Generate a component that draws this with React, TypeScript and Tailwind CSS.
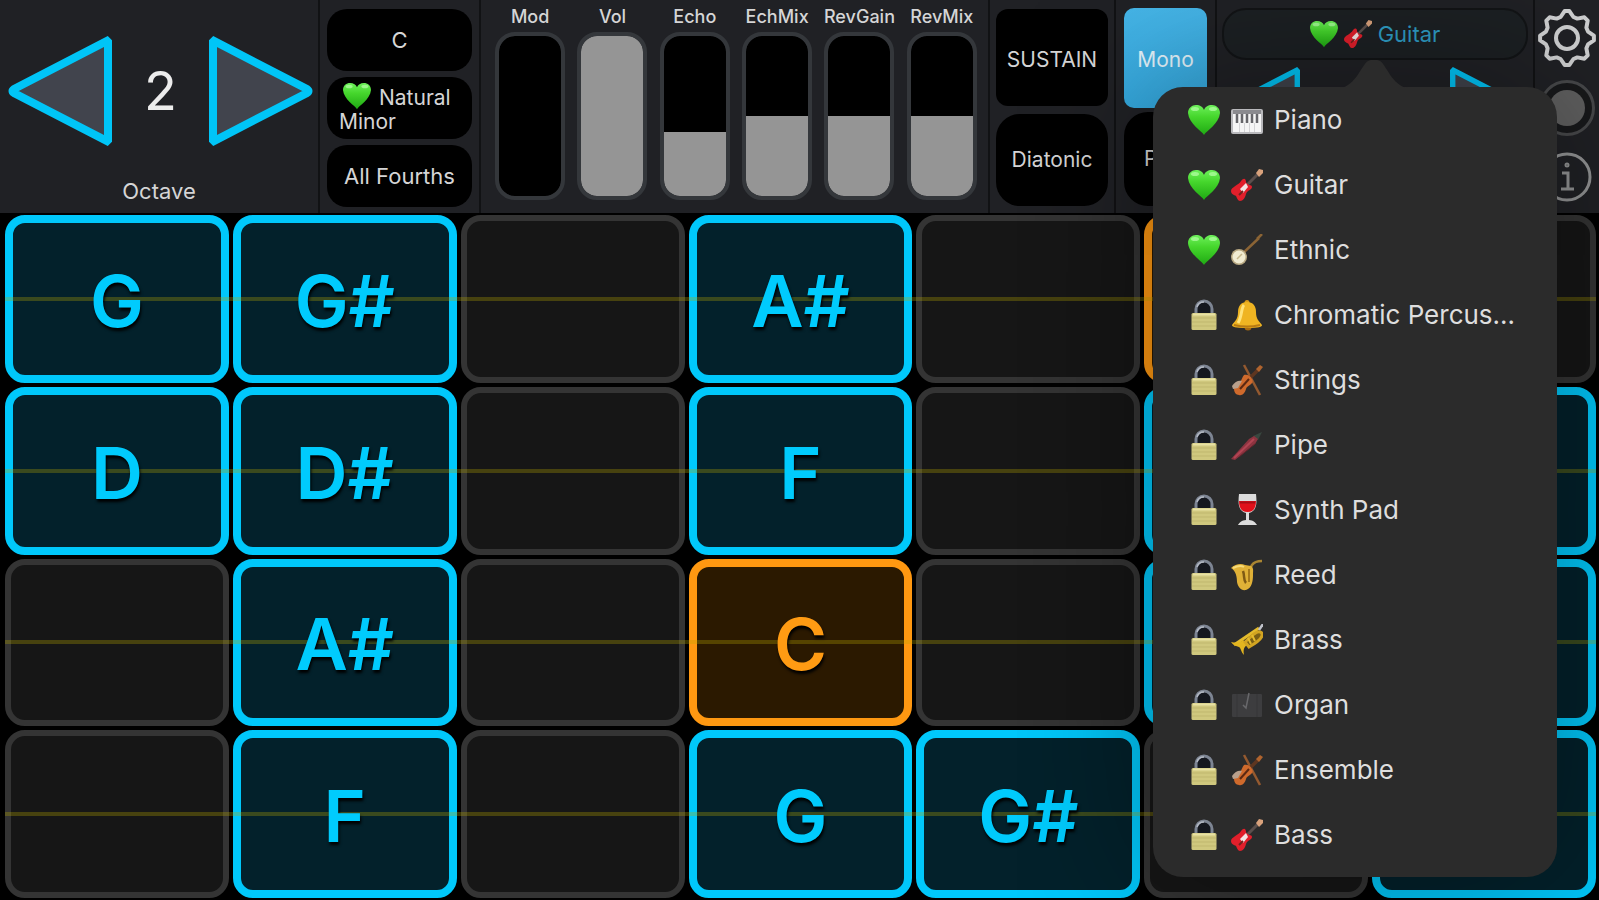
import { useState } from "react";
import type { ReactNode } from "react";
import clsx from "clsx";

type Tone = "off" | "on" | "root";
type Pad = { note: string; tone: Tone };

const NOTES = ["C", "C#", "D", "D#", "E", "F", "F#", "G", "G#", "A", "A#", "B"];
const C_MINOR = [0, 2, 3, 5, 7, 8, 10];
const ROW_STARTS = [7, 2, 9, 4];
const COLUMNS = 7;
// the instrument menu lies over the pads after this one
const LABELLED_COLUMNS = 5;

function buildRow(start: number): Pad[] {
  return Array.from({ length: COLUMNS }, (_, i) => {
    const n = (start + i) % 12;
    if (n === 0) return { note: NOTES[n], tone: "root" };
    return { note: NOTES[n], tone: C_MINOR.includes(n) ? "on" : "off" };
  });
}

const SLIDERS = [
  { name: "Mod", value: 0 },
  { name: "Vol", value: 100 },
  { name: "Echo", value: 40 },
  { name: "EchMix", value: 50 },
  { name: "RevGain", value: 50 },
  { name: "RevMix", value: 50 },
];

function Icon({ className, children }: { className?: string; children: ReactNode }) {
  return (
    <svg viewBox="0 0 32 32" className={clsx("shrink-0", className)} aria-hidden="true">
      {children}
    </svg>
  );
}

function Heart({ className }: { className?: string }) {
  return (
    <Icon className={className}>
      <defs>
        <linearGradient id="heart" x1="0" y1="0" x2="0" y2="1">
          <stop offset="0" stopColor="#6df05a" />
          <stop offset="0.4" stopColor="#45d62c" />
          <stop offset="1" stopColor="#1fa913" />
        </linearGradient>
      </defs>
      <path d="M16 31C14 27 1 20 0 9 0 4 4 1 8 1c4 0 7 2 8 5 1-3 4-5 8-5 4 0 8 3 8 8-1 11-14 18-16 22z" fill="url(#heart)" />
      <ellipse cx="7" cy="5" rx="4" ry="2" fill="#b6ffa8" opacity="0.7" />
      <ellipse cx="25" cy="5" rx="4" ry="2" fill="#b6ffa8" opacity="0.7" />
    </Icon>
  );
}

function Lock({ className }: { className?: string }) {
  return (
    <Icon className={className}>
      <path d="M8 16V10a8 8 0 0 1 16 0v6" fill="#15181f" stroke="#7d8593" strokeWidth="3" />
      <path d="M9 8a7 7 0 0 1 7-5" fill="none" stroke="#b4bac4" strokeWidth="1.500" />
      <rect x="3.500" y="14" width="25" height="17" rx="1.500" fill="#d0c87e" />
      <path d="M4 19h24M4 23h24M4 27h24" stroke="#c0b76e" strokeWidth="1" />
      <path d="M5 15.500h22" stroke="#e9e2a4" strokeWidth="2" />
    </Icon>
  );
}

function Piano({ className }: { className?: string }) {
  return (
    <Icon className={className}>
      <rect x="0" y="5" width="32" height="25" rx="2" fill="#b9b9bc" />
      <rect x="2" y="6" width="28" height="5" fill="#8b8b8f" />
      <rect x="2" y="10" width="28" height="18" fill="#f5f5f5" />
      <path d="M6 10v9M11 10v9M16 10v9M21 10v9M26 10v9" stroke="#66666a" strokeWidth="2.500" />
      <path d="M8.500 19v9M13.500 19v9M18.500 19v9M23.500 19v9" stroke="#d4d4d6" strokeWidth="1" />
    </Icon>
  );
}

function Guitar({ className }: { className?: string }) {
  return (
    <Icon className={className}>
      <path d="M15 17 27 5" stroke="#5b4f4c" strokeWidth="3" />
      <path d="M25 4 28 0l4 1v3l-4 4z" fill="#d9a27c" />
      <path d="M10 12c3-4 5-2 5 1 1 4 6 2 6 5 0 3-5 3-6 7s-3 7-6 7c-2 0-3-3-4-5-2-1-5-2-5-5 0-4 8-6 10-10z" fill="#e11f2b" />
      <path d="m9 20 6-6 2 4-5 6z" fill="#f3e6e4" />
      <path d="M8 26l4-4" stroke="#77211f" strokeWidth="2" />
    </Icon>
  );
}

function Banjo({ className }: { className?: string }) {
  return (
    <Icon className={className}>
      <path d="M10 21 28 4" stroke="#8b6435" strokeWidth="2.500" />
      <path d="M26 5l5-5" stroke="#8b6435" strokeWidth="2.500" />
      <circle cx="8" cy="23" r="8" fill="#b9a983" />
      <circle cx="8" cy="23" r="6.500" fill="#f1ecd2" />
      <path d="M6 25l5-5" stroke="#c6b88d" strokeWidth="1.500" />
    </Icon>
  );
}

function Bell({ className }: { className?: string }) {
  return (
    <Icon className={className}>
      <circle cx="16" cy="3.500" r="2.500" fill="#d79a1b" />
      <circle cx="17" cy="28" r="3.500" fill="#a86a10" />
      <path d="M16 3c6 0 9 4 9 10 0 7 3 9 6 13 0 2-3 3-15 3S1 28 1 26c3-4 6-6 6-13C7 7 10 3 16 3z" fill="#efb422" />
      <path d="M13 6c-3 3-2 12-6 18" stroke="#ffe27a" strokeWidth="3" fill="none" />
      <path d="M3 26c8 2 18 2 26 0" stroke="#b77a12" strokeWidth="2" fill="none" />
    </Icon>
  );
}

function Violin({ className }: { className?: string }) {
  return (
    <Icon className={className}>
      <path d="M13 1 29 31" stroke="#94592f" strokeWidth="2.500" />
      <path d="M15 18 27 6" stroke="#5e3620" strokeWidth="3.500" />
      <path d="m25 5 4-4 3 2-4 5z" fill="#b0642e" />
      <path d="M13 11c3-1 7 1 8 4 1 2 1 4-1 5-2 2-4 2-5 5-1 4-4 7-7 6-3 0-5-3-5-6 0-4 4-5 6-7s2-5 4-7z" fill="#cf6a2c" />
      <path d="M1 22c3-5 7-6 10-5l-4 7-5 1z" fill="#b9a08c" />
      <path d="m9 25 9-10" stroke="#5a2812" strokeWidth="2" />
    </Icon>
  );
}

function Pipe({ className }: { className?: string }) {
  return (
    <Icon className={className}>
      <path d="M22 7 31 3 27 11z" fill="#39473f" />
      <path d="M0 30 18 10l5-3 4 3-3 5L4 31z" fill="#8d3440" />
      <path d="M3 29 23 10" stroke="#b14453" strokeWidth="2" />
      <path d="M8 28 25 14" stroke="#64252d" strokeWidth="1" />
    </Icon>
  );
}

function Wine({ className }: { className?: string }) {
  return (
    <Icon className={className}>
      <path d="M8 0h17c1 9 1 17-7 19v7c4 0 7 3 8 5H7c1-2 4-5 8-5v-7C7 17 7 9 8 0z" fill="#dcdcdc" />
      <path d="M8 7h17c0 6-2 11-8.500 11S8 13 8 7z" fill="#e0101a" />
      <path d="M9 8.500h15" stroke="#a80c15" strokeWidth="2" />
    </Icon>
  );
}

function Sax({ className }: { className?: string }) {
  return (
    <Icon className={className}>
      <path d="M31 2c-5 0-8 1-10 4l-3 6" fill="none" stroke="#a98532" strokeWidth="2.500" />
      <path d="M0 9c4-4 10-5 14-3l6 1c3 2 2 5 2 9 0 6-1 13-7 15-5 1-8-3-9-8C6 18 5 12 0 9z" fill="#e0b137" />
      <path d="M12 12c2 5 0 9 3 12" fill="none" stroke="#7f5a14" strokeWidth="2.500" />
      <path d="M18 10v13" stroke="#a77a1b" strokeWidth="2" />
      <path d="M2 9c4-2 8-3 11-1" fill="none" stroke="#f6da78" strokeWidth="2" />
    </Icon>
  );
}

function Trumpet({ className }: { className?: string }) {
  return (
    <Icon className={className}>
      <path d="M3 21 28 4" stroke="#e4bb2c" strokeWidth="3" />
      <path d="M28 6l4-6" stroke="#bfc1c9" strokeWidth="2.500" />
      <path d="M0 18c5 1 9 1 12-2l5 4c-4 3-5 5-4 11-3-3-3-7-5-8-3-1-6-2-8-5z" fill="#e3b51f" />
      <path d="M14 18l9-8c5-4 9-2 8 2-1 3-6 7-13 11z" fill="#7b5f14" stroke="#d2a421" strokeWidth="3" />
      <path d="m17 14 3 6M21 11l3 6" stroke="#e4bb2c" strokeWidth="2" />
    </Icon>
  );
}

function Organ({ className }: { className?: string }) {
  return (
    <Icon className={className}>
      <rect x="1" y="5" width="30" height="23" rx="1" fill="#3d3d3f" />
      <path d="M6 5v23M26 5v23" stroke="#363638" strokeWidth="1" />
      <path d="M12 16l3 3 3-15" fill="none" stroke="#68686b" strokeWidth="1.500" />
    </Icon>
  );
}

const INSTRUMENTS = [
  { name: "Piano", icon: Piano, free: true },
  { name: "Guitar", icon: Guitar, free: true },
  { name: "Ethnic", icon: Banjo, free: true },
  { name: "Chromatic Percus…", icon: Bell, free: false },
  { name: "Strings", icon: Violin, free: false },
  { name: "Pipe", icon: Pipe, free: false },
  { name: "Synth Pad", icon: Wine, free: false },
  { name: "Reed", icon: Sax, free: false },
  { name: "Brass", icon: Trumpet, free: false },
  { name: "Organ", icon: Organ, free: false },
  { name: "Ensemble", icon: Violin, free: false },
  { name: "Bass", icon: Guitar, free: false },
];

function Arrow({ dir, label, small, onClick }: { dir: "left" | "right"; label: string; small?: boolean; onClick?: () => void }) {
  return (
    <button type="button" aria-label={label} onClick={onClick} className="shrink-0">
      <svg
        viewBox="0 0 104 110"
        className={clsx(small ? "h-[74px] w-[70px]" : "h-[110px] w-[104px]", dir === "right" && "-scale-x-100")}
      >
        <path
          d="M6 53 99 5 100 6V104L99 105 6 57Q3 55 6 53z"
          fill="#41444d"
          stroke="#00c5f7"
          strokeWidth="8"
          strokeLinejoin="miter"
        />
      </svg>
    </button>
  );
}

// eight blunt teeth, the first one pointing straight up
const gearPoints = Array.from({ length: 8 }, (_, k) =>
  [
    [-5, 27],
    [5, 27],
    [17, 22],
    [28, 22],
  ].map(([deg, r]) => {
    const a = ((k * 45 + deg) * Math.PI) / 180;
    return `${(r * Math.sin(a)).toFixed(1)},${(-r * Math.cos(a)).toFixed(1)}`;
  }),
)
  .flat()
  .join(" ");

function Gear() {
  return (
    <svg viewBox="-30 -30 60 60" className="size-[60px]" fill="none" stroke="#cfd0d1" strokeWidth="4" strokeLinejoin="round">
      <polygon points={gearPoints} />
      <circle r="11" />
    </svg>
  );
}

function Slider({ name, value, onChange }: { name: string; value: number; onChange: (v: number) => void }) {
  return (
    <label className="flex w-0 flex-1 flex-col items-center">
      <span className="h-6 text-[18px] leading-6 font-medium">{name}</span>
      <input
        type="range"
        min={0}
        max={100}
        value={value}
        onChange={(e) => onChange(Number(e.target.value))}
        className="mt-[3px] h-[168px] w-[70px] appearance-none rounded-[20px] border-4 border-[#34373b] bg-clip-padding [direction:rtl] [writing-mode:vertical-lr] [&::-webkit-slider-thumb]:size-1 [&::-webkit-slider-thumb]:appearance-none [&::-webkit-slider-thumb]:opacity-0"
        style={{ backgroundImage: `linear-gradient(to top, #959595 ${value}%, #000 ${value}%)` }}
      />
    </label>
  );
}

function PadButton({ note, tone, labelled }: Pad & { labelled: boolean }) {
  return (
    <button
      type="button"
      aria-label={note}
      className={clsx(
        "flex items-center justify-center rounded-[20px] pt-1 text-7xl font-semibold",
        tone === "on" && "border-8 border-[#00c8fb] bg-[#03212b] text-[#00cbfd]",
        tone === "root" && "border-8 border-[#ff9811] bg-[#2b1900] text-[#ff9b13]",
        tone === "off" && "border-[6px] border-[#343434] bg-[#161616]",
      )}
    >
      {labelled && tone !== "off" && <span className="relative z-10 [text-shadow:1px_3px_3px_#000]">{note}</span>}
    </button>
  );
}

function InstrumentMenu({ onPick }: { onPick: (i: number) => void }) {
  return (
    <div className="absolute top-[87px] -right-6 z-20 w-[404px] rounded-[30px] bg-[#2b2b2b] pb-[10px] shadow-[0_0_150px_rgba(0,0,0,0.4)]">
      <svg viewBox="0 0 68 28" className="absolute -top-[27px] right-[149px] h-7 w-[68px]">
        <path d="M0 28C16 26 22 4 28 1Q34 -2 40 1C46 4 52 26 68 28z" fill="#2b2b2b" />
      </svg>
      <ul>
        {INSTRUMENTS.map(({ name, icon: Glyph, free }, i) => (
          <li key={name}>
            <button
              type="button"
              onClick={() => onPick(i)}
              className="flex h-[65px] w-full items-center gap-[11px] pr-4 pl-[35px] text-left text-[26px] whitespace-nowrap text-[#dedede]"
            >
              {free ? <Heart className="size-8" /> : <Lock className="size-8" />}
              <Glyph className="size-8" />
              {name}
            </button>
          </li>
        ))}
      </ul>
    </div>
  );
}

export default function App() {
  const [octave, setOctave] = useState(2);
  const [levels, setLevels] = useState(SLIDERS.map((s) => s.value));
  const [picked, setPicked] = useState(1);
  const current = INSTRUMENTS[picked];
  const CurrentIcon = current.icon;

  return (
    <div className="flex min-h-screen flex-col overflow-hidden bg-black font-['Inter','Liberation_Sans',sans-serif] text-[#d5d5d6]">
      <header className="grid h-[213px] grid-cols-[318fr_159fr_507fr_124fr_99fr_316fr_64fr] gap-0.5 bg-[#111214] *:min-w-0 *:bg-[#202125]">
        <section className="flex flex-col items-center pt-9">
          <div className="flex w-full items-center justify-between pr-[5px] pl-2">
            <Arrow dir="left" label="Octave down" onClick={() => setOctave(octave - 1)} />
            <output className="text-[54px] leading-none text-[#ececec]">{octave}</output>
            <Arrow dir="right" label="Octave up" onClick={() => setOctave(octave + 1)} />
          </div>
          <span className="mt-[33px] text-[22px] leading-6">Octave</span>
        </section>

        <section className="flex flex-col gap-[6px] px-[7px] pt-[9px] pb-[6px] text-[22px] leading-6">
          <button type="button" className="flex-1 rounded-[20px] bg-black">C</button>
          <button type="button" className="flex-1 rounded-[20px] bg-black pl-3 text-left text-[21px] leading-6">
            <Heart className="mr-2 ml-1 inline size-7 align-[-5px]" />
            Natural Minor
          </button>
          <button type="button" className="flex-1 rounded-[20px] bg-black whitespace-nowrap">All Fourths</button>
        </section>

        <section className="flex pt-[5px] pr-[5px] pl-2">
          {SLIDERS.map((s, i) => (
            <Slider
              key={s.name}
              name={s.name}
              value={levels[i]}
              onChange={(v) => setLevels(levels.map((l, j) => (j === i ? v : l)))}
            />
          ))}
        </section>

        <section className="flex flex-col gap-2 px-[6px] pt-[9px] pb-[7px] text-[21px]">
          <button type="button" className="flex-1 rounded-xl bg-black pt-1">SUSTAIN</button>
          <button type="button" className="flex-1 rounded-3xl bg-black">Diatonic</button>
        </section>

        <section className="flex flex-col gap-1 px-2 pt-2 pb-[7px] text-[21px]">
          <button type="button" className="h-[100px] rounded-[10px] bg-linear-to-b from-[#45b5e8] to-[#34a9df] pt-1 text-[#e4f4fc]">Mono</button>
          <button type="button" className="flex-1 rounded-3xl bg-black">Poly</button>
        </section>

        <section className="relative px-[5px] pt-2">
          <button
            type="button"
            className="flex h-[52px] w-full items-center justify-center gap-[6px] rounded-3xl border-2 border-[#121416] bg-[#1c2023] text-[22px] text-[#2e9cc4]"
          >
            <Heart className="size-7" />
            <CurrentIcon className="size-7" />
            {current.name}
          </button>
          <div className="mt-[7px] flex justify-center gap-[150px]">
            <Arrow small dir="left" label="Previous preset" />
            <Arrow small dir="right" label="Next preset" />
          </div>
          <InstrumentMenu onPick={setPicked} />
        </section>

        <section className="flex flex-col items-center pt-2">
          <button type="button" aria-label="Settings">
            <Gear />
          </button>
          <button type="button" aria-label="Record" className="mt-3 flex size-14 items-center justify-center rounded-full border-[3px] border-[#48494b] bg-[#18191b]">
            <span className="size-9 rounded-full bg-[#606060]" />
          </button>
          <button type="button" aria-label="Info" className="mt-4">
            <svg viewBox="0 0 50 50" className="size-[50px]" fill="none" stroke="#949596" strokeWidth="3">
              <circle cx="25" cy="25" r="23" />
              <path d="M20 21h6v16M19 37h13" />
              <circle cx="25" cy="13" r="1" />
            </svg>
          </button>
        </section>
      </header>

      <main className="flex flex-1 flex-col gap-1 pt-0.5 pr-[3px] pb-0.5 pl-[5px]">
        {ROW_STARTS.map((start) => (
          <div key={start} className="relative grid min-h-32 flex-1 grid-cols-7 gap-1">
            {buildRow(start).map((pad, col) => (
              <PadButton key={pad.note} {...pad} labelled={col < LABELLED_COLUMNS} />
            ))}
            <div className="pointer-events-none absolute inset-x-0 top-1/2 h-1 -translate-y-1/2 bg-[#b8a800]/30" />
          </div>
        ))}
      </main>
    </div>
  );
}
